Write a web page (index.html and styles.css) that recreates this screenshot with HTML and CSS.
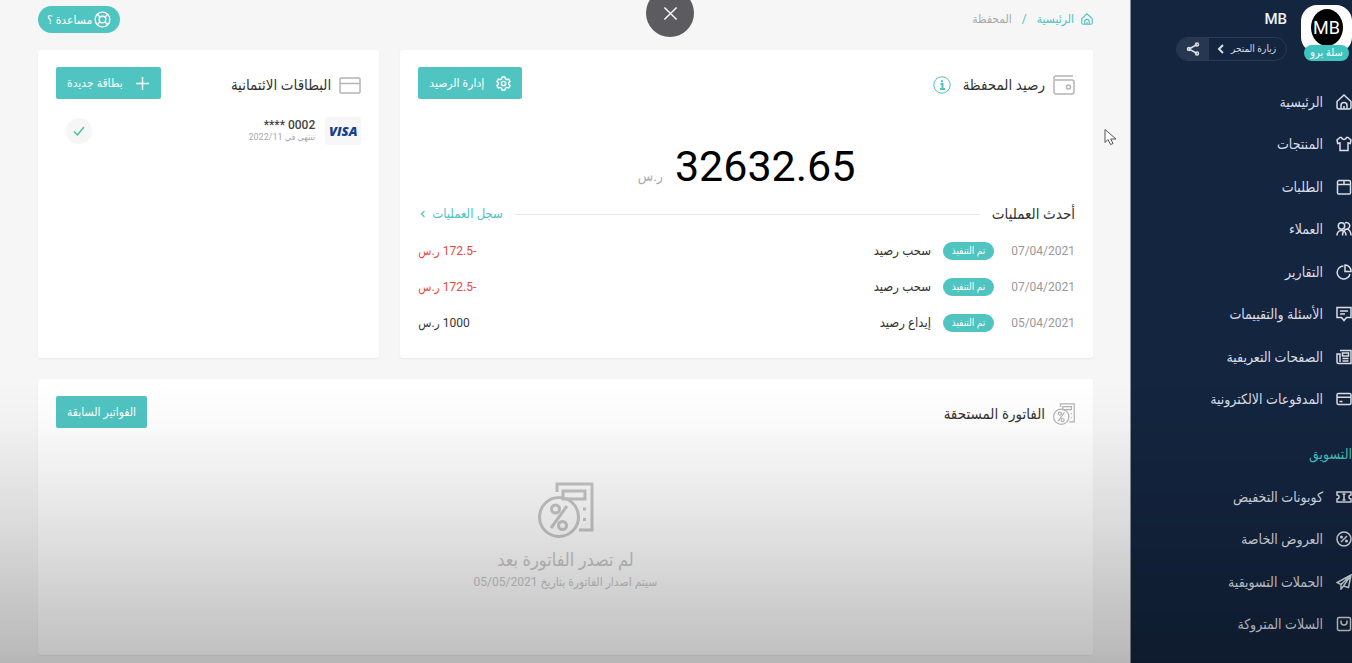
FILE: index.html
```html
<!DOCTYPE html>
<html lang="ar" dir="rtl">
<head>
<meta charset="utf-8">
<title>المحفظة</title>
<link rel="stylesheet" href="styles.css">
</head>
<body>
<svg class="sprite" aria-hidden="true">
  <symbol id="i-home" viewBox="0 0 16 16"><path d="M1 7.500 8 1l7 6.500V13a2 2 0 0 1-2 2H3a2 2 0 0 1-2-2ZM5 15v-3.500a3 3 0 0 1 6 0V15M8 12V15"/></symbol>
  <symbol id="i-shirt" viewBox="0 0 16 16"><path d="M5.500 1.500C6 4 10 4 10.500 1.500h1.500L15 4l-.700 3.500L12 7v7.500H4V7l-2.300.500L1 4l3-2.500Z"/></symbol>
  <symbol id="i-box" viewBox="0 0 16 16"><rect x="1.500" y="5.500" width="13" height="9.500" rx="1"/><path d="M1.500 6V3A1.500 1.500 0 0 1 3 1.500h10A1.500 1.500 0 0 1 14.500 3v3M8 1.500v4"/></symbol>
  <symbol id="i-users" viewBox="0 0 16 16"><circle cx="5.500" cy="5" r="3.200"/><path d="M1 14.500c0-2.500 1.500-5 4.500-5s4.500 2.500 4.500 5M9 2a3.200 3.200 0 1 1 1.500 6c3 .300 4.500 3.500 4.500 6.500M6.500 14.500c0-2.500 1.500-5.500 4-6.500"/></symbol>
  <symbol id="i-pie" viewBox="0 0 16 16"><path d="M7.500 2A6.500 6.500 0 1 0 14 10M9 1v6.500h6A6 6 0 0 0 9 1Z"/></symbol>
  <symbol id="i-chat" viewBox="0 0 16 16"><path d="M1 1.500h14v10h-4.500L8 14.500l-2.500-3H1ZM4 5h8M4 8h5"/></symbol>
  <symbol id="i-news" viewBox="0 0 16 16"><path d="M4 1.500h11v13H2.500A1.500 1.500 0 0 1 1 13V5h3v8M6.500 4h6v3h-6ZM6.500 9.500h6M6.500 12h6"/></symbol>
  <symbol id="i-card" viewBox="0 0 16 16"><rect x="1" y="2.500" width="14" height="11" rx="1.500"/><path d="M1 6.200h14M3.500 10.500h3"/></symbol>
  <symbol id="i-ticket" viewBox="0 0 16 16"><path d="M1 3h14v3a2 2 0 0 0 0 4v3H1v-3a2 2 0 0 0 0-4ZM8 5v6M6.500 5h3M6.500 11h3"/></symbol>
  <symbol id="i-percent" viewBox="0 0 16 16"><circle cx="8" cy="8" r="7"/><path d="m5 11 6-6"/><circle cx="5.500" cy="6" r=".8"/><circle cx="10.500" cy="10" r=".8"/></symbol>
  <symbol id="i-plane" viewBox="0 0 16 16"><path d="M15 1 1 8.500l4 2V15l2.500-3 5 1.500ZM5 10.500 15 1 7.500 12"/></symbol>
  <symbol id="i-bag" viewBox="0 0 16 16"><rect x="1.500" y="1.500" width="13" height="13" rx="1.500"/><path d="M5 4.500v1.500a3 3 0 0 0 6 0V4.500"/></symbol>
  <symbol id="i-chevron" viewBox="0 0 8 10"><path d="M6 1 2 5l4 4"/></symbol>
  <symbol id="i-invoice" viewBox="0 0 56 56"><path d="M19 10V2h35v46H41M43 17H25V9h22v8h-4"/><circle cx="21" cy="35" r="19.500"/><path d="m13 46 16-22"/><circle cx="17.500" cy="27" r="4"/><circle cx="24.500" cy="43.500" r="4"/><path d="M45 27h3M45 37.500h3"/></symbol>
</svg>

<div class="app">
  <aside class="sidebar">
    <header class="store">
      <div class="avatar">
        <span class="avatar-logo">MB</span>
        <span class="avatar-plan">سلة برو</span>
      </div>
      <div class="store-info">
        <strong class="store-name">MB</strong>
        <div class="store-actions">
          <a class="visit" href="#">زيارة المتجر <svg class="visit-arrow"><use href="#i-chevron"/></svg></a>
          <button class="share" type="button" aria-label="مشاركة">
            <svg viewBox="0 0 14 14"><path d="m11 2.500-8 4.500 8 4.500"/><circle cx="11" cy="2.500" r="1.500"/><circle cx="3" cy="7" r="1.500"/><circle cx="11" cy="11.500" r="1.500"/></svg>
          </button>
        </div>
      </div>
    </header>
    <nav>
      <ul class="menu">
        <li><a href="#"><svg><use href="#i-home"/></svg>الرئيسية</a></li>
        <li><a href="#"><svg><use href="#i-shirt"/></svg>المنتجات</a></li>
        <li><a href="#"><svg><use href="#i-box"/></svg>الطلبات</a></li>
        <li><a href="#"><svg><use href="#i-users"/></svg>العملاء</a></li>
        <li><a href="#"><svg><use href="#i-pie"/></svg>التقارير</a></li>
        <li><a href="#"><svg><use href="#i-chat"/></svg>الأسئلة والتقييمات</a></li>
        <li><a href="#"><svg><use href="#i-news"/></svg>الصفحات التعريفية</a></li>
        <li><a href="#"><svg><use href="#i-card"/></svg>المدفوعات الالكترونية</a></li>
      </ul>
      <h2 class="menu-title">التسويق</h2>
      <ul class="menu">
        <li><a href="#"><svg><use href="#i-ticket"/></svg>كوبونات التخفيض</a></li>
        <li><a href="#"><svg><use href="#i-percent"/></svg>العروض الخاصة</a></li>
        <li><a href="#"><svg><use href="#i-plane"/></svg>الحملات التسويقية</a></li>
        <li><a href="#"><svg><use href="#i-bag"/></svg>السلات المتروكة</a></li>
      </ul>
    </nav>
  </aside>

  <main class="main">
    <div class="topbar">
      <nav class="crumbs">
        <a href="#"><svg><use href="#i-home"/></svg>الرئيسية</a>
        <span class="crumb-sep">/</span>
        <span>المحفظة</span>
      </nav>
      <button class="help" type="button">
        <svg viewBox="0 0 18 18"><circle cx="9" cy="9" r="7.800"/><circle cx="9" cy="9" r="3.500"/><path d="m3.500 3.500 3 3m5 5 3 3m0-11-3 3m-5 5-3 3"/></svg>
        مساعدة ؟
      </button>
    </div>

    <div class="grid">
      <section class="card">
        <header class="card-head">
          <h2><svg class="head-icon" viewBox="0 0 22 20"><path d="M20 1H3a2 2 0 0 0-2 2v14a2 2 0 0 0 2 2h16a2 2 0 0 0 2-2V7a2 2 0 0 0-2-2H2"/><circle cx="15.500" cy="12" r="2"/></svg>رصيد المحفظة
            <svg class="info" viewBox="0 0 18 18"><circle cx="9" cy="9" r="8.200"/><path class="info-mark" d="M7.500 8H9.500v5M7 13h5M9 4.200v2"/></svg></h2>
          <button class="btn" type="button"><svg viewBox="0 0 16 16"><path d="M6.500 1h3l.5 2 1.500.900 2-.600 1.500 2.600L13.500 7.300v1.500l1.500 1.400-1.500 2.600-2-.600-1.500.900-.5 2h-3l-.5-2-1.500-.900-2 .600L1 10.200l1.500-1.400V7.300L1 5.900l1.500-2.600 2 .600L6 3Z"/><circle cx="8" cy="8" r="2.300"/></svg>إدارة الرصيد</button>
        </header>
        <p class="balance"><span>32632.65</span> <small>ر.س</small></p>
        <div class="ops-head">
          <h3>أحدث العمليات</h3>
          <a href="#">سجل العمليات <svg><use href="#i-chevron"/></svg></a>
        </div>
        <table class="ops">
          <tr><td class="date">07/04/2021</td><td class="status"><span class="pill">تم التنفيذ</span></td><td>سحب رصيد</td><td class="amount minus">-172.5 ر.س</td></tr>
          <tr><td class="date">07/04/2021</td><td class="status"><span class="pill">تم التنفيذ</span></td><td>سحب رصيد</td><td class="amount minus">-172.5 ر.س</td></tr>
          <tr><td class="date">05/04/2021</td><td class="status"><span class="pill">تم التنفيذ</span></td><td>إيداع رصيد</td><td class="amount">1000 ر.س</td></tr>
        </table>
      </section>

      <section class="card">
        <header class="card-head">
          <h2><svg class="head-icon" viewBox="0 0 22 20"><rect x="1" y="3" width="20" height="15" rx="1"/><path d="M1 8.500h20"/></svg>البطاقات الائتمانية</h2>
          <button class="btn" type="button"><svg viewBox="0 0 16 16"><path d="M8 1v14M1 8h14"/></svg>بطاقة جديدة</button>
        </header>
        <div class="credit">
          <span class="visa">VISA</span>
          <div class="credit-info">
            <strong>0002 ****</strong>
            <span>تنتهي في 2022/11</span>
          </div>
          <button class="check" type="button" aria-label="البطاقة الافتراضية"><svg viewBox="0 0 12 12"><path d="m1 6.500 3.500 3.500L11 2"/></svg></button>
        </div>
      </section>

      <section class="card wide">
        <header class="card-head">
          <h2><svg class="head-icon thin"><use href="#i-invoice"/></svg>الفاتورة المستحقة</h2>
          <button class="btn" type="button">الفواتير السابقة</button>
        </header>
        <div class="empty">
          <svg><use href="#i-invoice"/></svg>
          <strong>لم تصدر الفاتورة بعد</strong>
          <span>سيتم اصدار الفاتورة بتاريخ 05/05/2021</span>
        </div>
      </section>
    </div>
  </main>
</div>

<button class="close" type="button" aria-label="إغلاق"><svg viewBox="0 0 16 16"><path d="m1.500 1.500 13 13m0-13-13 13"/></svg></button>
<svg class="cursor" viewBox="0 0 13 17"><path d="M1 1v13l3-3 2.500 5 2.500-1-2.300-4.500H12Z"/></svg>
</body>
</html>
```
FILE: styles.css
```css
* { box-sizing: border-box; }

body {
  margin: 0;
  min-height: 100vh;
  overflow: hidden;
  background: #f6f6f6;
  color: #333;
  font: 12px/16px Roboto, "DejaVu Sans Condensed", "DejaVu Sans", sans-serif;
}

body::after {
  content: "";
  position: fixed;
  inset: 0;
  pointer-events: none;
  background: linear-gradient(rgba(0, 0, 0, 0) 58%, rgba(0, 0, 0, .02) 64%, rgba(0, 0, 0, .1) 78%, rgba(0, 0, 0, .24) 98%, rgba(0, 0, 0, .26));
}

h2, h3, p, ul { margin: 0; padding: 0; font-weight: 400; }
a { color: inherit; text-decoration: none; }
button { font: inherit; color: inherit; border: 0; padding: 0; cursor: pointer; }
svg { fill: none; stroke: currentColor; stroke-width: 1.5; flex: none; }
.sprite { position: absolute; width: 0; height: 0; }

.app { display: flex; height: 100vh; overflow: hidden; }

/* Sidebar */
.sidebar {
  flex: none;
  width: 222px;
  border-left: 1px solid #8a9099;
  background: #14253f;
  color: #d9dde6;
}
.store { display: flex; gap: 14px; padding-top: 5px; height: 75px; }
.avatar {
  position: relative;
  width: 51px;
  height: 48px;
  padding-top: 4px;
  border-radius: 16px;
  background: #fff;
}
.avatar-logo {
  display: block;
  width: 32px;
  height: 37px;
  margin: 0 auto;
  border-radius: 50%;
  background: #000;
  color: #fff;
  font: 18px/37px Roboto, sans-serif;
  text-align: center;
}
.avatar-plan {
  position: absolute;
  inset: 40px 3px auto 3px;
  border-radius: 8px;
  background: #3fc4c0;
  color: #fff;
  font-size: 11px;
  text-align: center;
}
.store-info { display: flex; flex-direction: column; gap: 8px; align-items: flex-start; }
.store-name { margin-top: 4px; font-size: 15px; line-height: 20px; font-weight: 500; color: #eef0f4; }
.store-actions { display: flex; height: 24px; border: 1px solid #2a3b54; border-radius: 12px; overflow: hidden; }
.visit { display: flex; align-items: center; gap: 6px; padding: 0 10px 0 8px; font-size: 10px; }
.visit-arrow { width: 8px; height: 10px; stroke-width: 2; }
.share { display: grid; place-items: center; width: 32px; background: #26374f; }
.share svg { width: 14px; height: 14px; }

.menu { list-style: none; padding-top: 6px; }
.menu li { height: 42px; }
.menu li:nth-child(even) { margin-bottom: 1px; }
.menu a { display: flex; align-items: center; gap: 13px; height: 42px; font-size: 14px; }
.menu svg { width: 16px; height: 16px; }
.menu-title { padding-top: 23px; height: 49px; color: #45c1be; font-size: 14px; line-height: 20px; }

/* Main */
.main { flex: 1; min-width: 0; padding: 6px 37px 0 38px; }
.topbar { display: flex; justify-content: space-between; height: 44px; }
.crumbs { display: flex; gap: 10px; height: 26px; align-items: center; font-size: 12px; color: #aaa; }
.crumbs a { display: flex; align-items: center; gap: 7px; color: #4ec3bf; }
.crumbs svg { width: 12px; height: 12px; }
.crumb-sep { color: #4ec3bf; }
.help {
  display: flex;
  align-items: center;
  gap: 2px;
  height: 27px;
  padding: 0 9px;
  border-radius: 14px;
  background: #50c4c1;
  color: #fff;
  font-size: 12px;
}
.help svg { width: 17px; height: 17px; }

.grid { display: grid; grid-template-columns: 67fr 33fr; gap: 21px; }
.card { padding: 17px 18px; border-radius: 3px; background: #fff; box-shadow: 0 1px 2px rgba(0, 0, 0, .06); }
.wide { grid-column: 1 / -1; min-height: 276px; }
.card-head { display: flex; justify-content: space-between; align-items: flex-start; }
.card-head h2 { display: flex; align-items: center; gap: 8px; height: 36px; font-size: 15px; }
.head-icon { width: 22px; height: 20px; color: #b4b4b4; }
.thin { height: 22px; stroke-width: 3; }
.info { width: 18px; height: 18px; margin-right: 4px; color: #4ec3bf; stroke-width: 1; }
.info-mark { stroke-width: 2; }
.btn {
  display: flex;
  align-items: center;
  gap: 12px;
  height: 32px;
  padding: 0 11px;
  border-radius: 2px;
  background: #50c4c1;
  color: #fff;
  font-size: 12px;
}
.btn svg { width: 15px; height: 15px; }

.balance { display: flex; justify-content: center; align-items: baseline; gap: 12px; height: 95px; padding-top: 35px; color: #000; }
.balance span { font-size: 43px; line-height: 56px; }
.balance small { font-size: 14px; color: #aaa; }
.ops-head { display: flex; align-items: center; gap: 12px; height: 32px; margin-bottom: 3px; }
.ops-head h3 { font-size: 15px; }
.ops-head::before { content: ""; order: 1; flex: 1; border-top: 1px solid #e9e9e9; }
.ops-head a { order: 2; display: flex; align-items: center; gap: 6px; padding-left: 2px; color: #4ec3bf; font-size: 13px; }
.ops-head a svg { width: 6px; height: 8px; }
.ops { width: 100%; border-collapse: collapse; font-size: 13px; }
.ops td { height: 36px; padding: 0; }
.ops .date { width: 81px; font-size: 12px; color: #999; }
.ops .status { width: 63px; }
.pill { display: block; width: 51px; border-radius: 9px; background: #50c4c1; color: #fff; font-size: 10px; line-height: 18px; text-align: center; }
.ops .amount { text-align: left; font-size: 12px; }
.ops .minus { color: #e8483c; }

.credit { display: flex; align-items: center; gap: 10px; margin-top: 14px; }
.visa { width: 36px; height: 28px; border-radius: 3px; background: #f7f7f7; color: #12408c; font: italic 900 13px/28px "Open Sans", sans-serif; text-align: center; }
.credit-info { display: flex; flex-direction: column; flex: 1; font-size: 9px; line-height: 12px; color: #aaa; }
.credit-info strong { font-size: 12px; font-weight: 500; color: #444; }
.check { display: grid; place-items: center; width: 26px; height: 26px; margin-left: 10px; border-radius: 50%; background: #f6f6f6; color: #45c1a8; }
.check svg { width: 12px; height: 12px; }

.empty { display: flex; flex-direction: column; align-items: center; padding-top: 50px; color: #c8c8c8; }
.empty svg { width: 56px; height: 56px; stroke-width: 3; }
.empty strong { margin-top: 10px; font-size: 18px; line-height: 24px; font-weight: 400; }
.empty span { font-size: 12px; line-height: 20px; }

/* Overlays */
.close {
  position: fixed;
  left: 646px;
  top: -11px;
  display: grid;
  place-items: center;
  width: 48px;
  height: 48px;
  border-radius: 50%;
  background: #5b5b60;
  color: #fff;
}
.close svg { width: 15px; height: 15px; }
.cursor { position: fixed; left: 1104px; top: 128px; width: 13px; height: 18px; fill: #fff; stroke: #555; stroke-width: 1; }
```
